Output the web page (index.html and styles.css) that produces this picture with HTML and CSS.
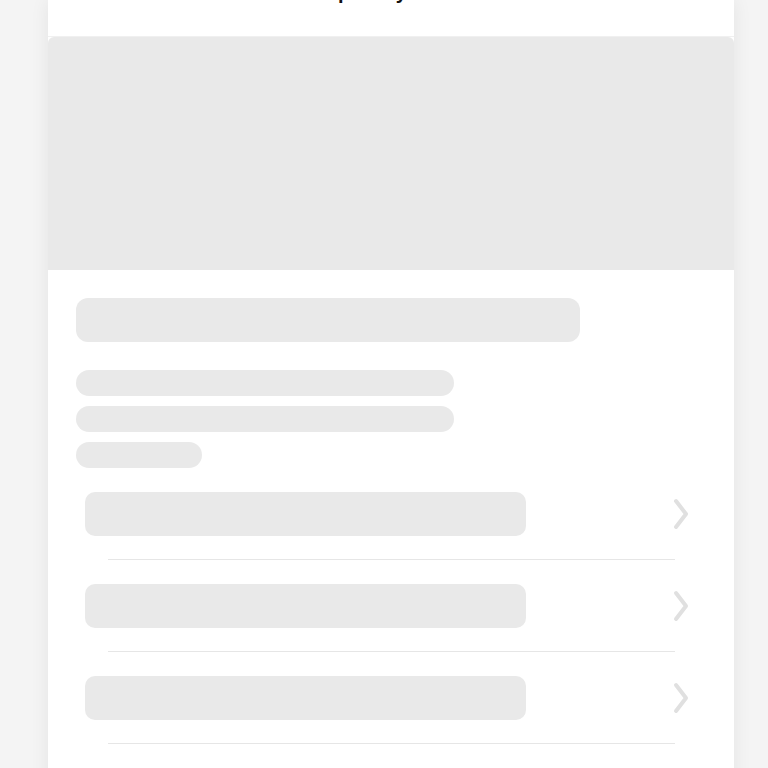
FILE: index.html
```html
<!DOCTYPE html>
<html lang="en">
<head>
<meta charset="utf-8">
<title>Loading</title>
<link rel="stylesheet" href="styles.css">
</head>
<body>
<div class="card">
  <header class="topbar"><span class="title">Top Story</span></header>
  <div class="hero"></div>
  <div class="content">
    <div class="sk sk-title"></div>
    <div class="lines">
      <div class="sk sk-line"></div>
      <div class="sk sk-line"></div>
      <div class="sk sk-line short"></div>
    </div>
  </div>
  <ul class="list">
    <li class="item">
      <div class="row"><div class="sk sk-row"></div><svg class="chev" viewBox="0 0 18 32"><polyline points="4,3 14,16 4,29"/></svg></div>
      <div class="divider"></div>
    </li>
    <li class="item">
      <div class="row"><div class="sk sk-row"></div><svg class="chev" viewBox="0 0 18 32"><polyline points="4,3 14,16 4,29"/></svg></div>
      <div class="divider"></div>
    </li>
    <li class="item">
      <div class="row"><div class="sk sk-row"></div><svg class="chev" viewBox="0 0 18 32"><polyline points="4,3 14,16 4,29"/></svg></div>
      <div class="divider"></div>
    </li>
  </ul>
</div>
</body>
</html>
```

FILE: styles.css
```css
* { box-sizing: border-box; }
html, body { margin: 0; padding: 0; }
body {
  background: #f4f4f4;
  font-family: "Liberation Sans", Arial, sans-serif;
  height: 768px;
  overflow: hidden;
}
.card {
  margin-left: 48px;
  width: 686px;
  min-height: 800px;
  background: #ffffff;
  box-shadow: 0 0 18px rgba(0, 0, 0, 0.07);
}
.topbar {
  height: 37px;
  overflow: hidden;
  text-align: center;
  padding-right: 60px;
  border-bottom: 1px solid #f0f0f0;
}
.title {
  display: block;
  font-size: 20px;
  font-weight: bold;
  color: #111;
  line-height: 20px;
  margin-top: -18px;
}
.hero {
  height: 233px;
  background: #e9e9e9;
  border-radius: 6px 6px 0 0;
}
.content {
  padding: 28px 0 0 28px;
}
.sk { background: #e9e9e9; }
.sk-title {
  width: 504px;
  height: 44px;
  border-radius: 12px;
}
.lines {
  margin-top: 28px;
  display: flex;
  flex-direction: column;
  gap: 10px;
}
.sk-line {
  width: 378px;
  height: 26px;
  border-radius: 13px;
}
.sk-line.short { width: 126px; }
.list {
  list-style: none;
  margin: 24px 0 0 0;
  padding: 0;
}
.row {
  display: flex;
  align-items: center;
  height: 44px;
  padding-left: 37px;
}
.sk-row {
  width: 441px;
  height: 44px;
  border-radius: 10px;
}
.chev {
  width: 18px;
  height: 32px;
  margin-left: auto;
  margin-right: 44px;
  fill: none;
  stroke: #e0e0e0;
  stroke-width: 4;
  stroke-linecap: round;
  stroke-linejoin: round;
}
.divider {
  margin: 23px 0 24px 60px;
  width: 567px;
  height: 1px;
  background: #e6e6e6;
}
```
